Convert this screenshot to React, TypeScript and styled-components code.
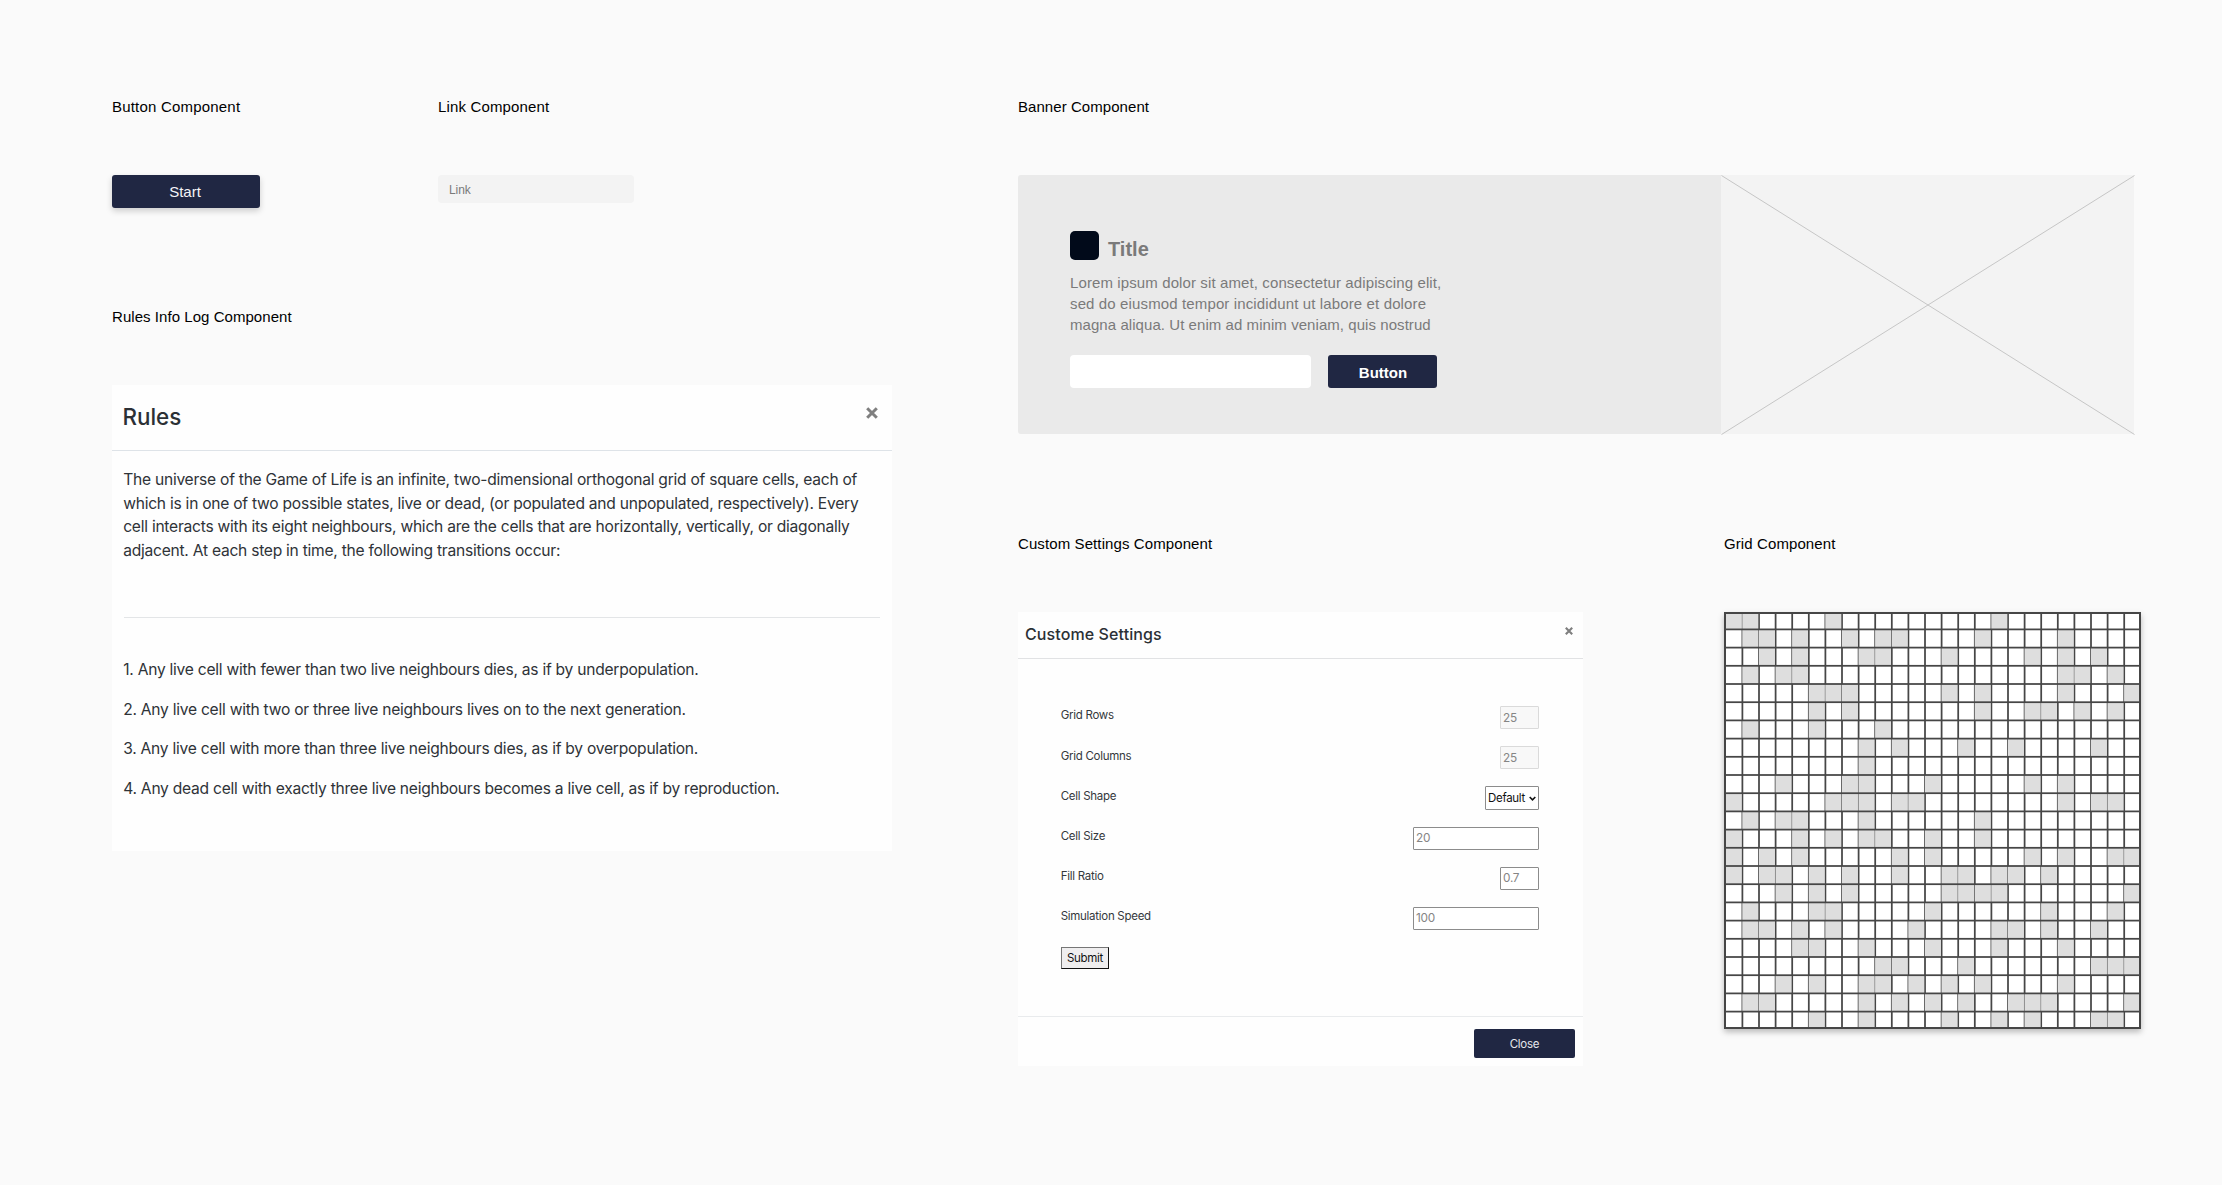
import React from 'react';
import styled, { createGlobalStyle } from 'styled-components';

const NAVY = '#202743';
const HELV = '"Liberation Sans", Arial, sans-serif';
const SYSTEM = 'Inter, "Liberation Sans", sans-serif';

const GlobalStyle = createGlobalStyle`
  *, *::before, *::after { box-sizing: border-box; }
  body { margin: 0; background: #fafafa; font-family: ${HELV}; }
  h1, h2, p, ol { margin: 0; padding: 0; font-weight: 400; }
  button, input { font-family: inherit; margin: 0; }
`;

const Page = styled.main`
  display: flex;
  align-items: flex-start;
  gap: 126px;
  width: 2222px;
  height: 1185px;
  padding: 98px 0 0 112px;
  background: #fafafa;
  overflow: hidden;
`;

const Column = styled.div<{ $gap: number }>`
  display: flex;
  flex-direction: column;
  gap: ${(p) => p.$gap}px;
`;

const Row = styled.div<{ $gap: number }>`
  display: flex;
  align-items: flex-start;
  gap: ${(p) => p.$gap}px;
`;

const Section = styled.section`
  display: flex;
  flex-direction: column;
  gap: 60px;
`;

const SectionLabel = styled.h2<{ $tracking: number }>`
  height: 17px;
  font-size: 15px;
  line-height: 17px;
  letter-spacing: ${(p) => p.$tracking}px;
  color: #000;
  white-space: nowrap;
`;

const StartButton = styled.button`
  width: 148px;
  height: 33px;
  padding: 0 2px 0 0;
  border: 0;
  border-radius: 3px;
  background: ${NAVY};
  box-shadow: 0 3px 6px rgba(0, 0, 0, 0.18);
  color: #f4f4f6;
  font-size: 15px;
  line-height: 33px;
`;

const LinkField = styled.div`
  width: 196px;
  height: 28px;
  padding-left: 11px;
  border-radius: 4px;
  background: #f3f3f3;
  color: #7a7a7a;
  font-size: 12px;
  line-height: 30px;
  letter-spacing: -0.1px;
`;

/* Rules dialog */

const RulesCard = styled.article`
  width: 780px;
  height: 466px;
  background: #fefefe;
  color: #2f3338;
  font-family: ${SYSTEM};
`;

const RulesHeader = styled.header`
  display: flex;
  justify-content: space-between;
  align-items: flex-start;
  height: 66px;
  padding: 19px 14px 0 10.5px;
  border-bottom: 1px solid #dee3e8;
`;

const RulesTitle = styled.h1`
  font-size: 22.4px;
  line-height: 26px;
  font-weight: 500;
  color: #2b3035;
`;

const CloseMark = styled.svg<{ $top: number }>`
  display: block;
  margin-top: ${(p) => p.$top}px;
  stroke: #7f7f7f;
  stroke-linecap: butt;
`;

const RulesBody = styled.div`
  padding: 17px 12px 0;
`;

const RulesText = styled.p`
  margin-left: -0.8px;
  font-size: 15.6px;
  line-height: 23.7px;
  letter-spacing: -0.252px;
  white-space: nowrap;
`;

const Divider = styled.hr`
  height: 1px;
  margin: 54px 0 40.5px;
  border: 0;
  background: #e3e5e7;
`;

const RulesList = styled.ol`
  display: flex;
  flex-direction: column;
  gap: 15.75px;
  list-style: none;
`;

/* Banner */

const BannerFrame = styled.div`
  display: flex;
  width: 1116px;
  height: 259px;
`;

const BannerContent = styled.div`
  width: 703px;
  padding: 56px 0 0 52px;
  border-radius: 3px 0 0 3px;
  background: #eaeaea;
`;

const BannerHeading = styled.div`
  display: flex;
  gap: 9px;
  height: 30px;
`;

const BannerMark = styled.span`
  width: 29px;
  height: 29px;
  border-radius: 5px;
  background: #010a1a;
`;

const BannerTitle = styled.h1`
  margin-top: 6px;
  font-size: 20px;
  line-height: 24px;
  font-weight: 700;
  color: #7a7a7a;
`;

const BannerText = styled.div`
  margin: 12px 0 19.6px;
`;

const BannerLine = styled.p<{ $tracking: number }>`
  font-size: 15px;
  line-height: 20.8px;
  letter-spacing: ${(p) => p.$tracking}px;
  color: #7a7a7a;
  white-space: nowrap;
`;

const BannerInput = styled.input`
  width: 241px;
  height: 33px;
  border: 0;
  border-radius: 4px;
  background: #fff;
`;

const BannerButton = styled.button`
  width: 109px;
  height: 33px;
  padding: 2px 0 0 1px;
  border: 0;
  border-radius: 3px;
  background: ${NAVY};
  color: #fff;
  font-size: 15px;
  font-weight: 700;
`;

const Placeholder = styled.svg`
  display: block;
  width: 413px;
  height: 259px;
  background: #f3f3f3;
  stroke: #c6c6c6;
  overflow: visible;
`;

/* Settings dialog */

const SettingsCard = styled.article`
  display: flex;
  flex-direction: column;
  width: 565px;
  height: 454px;
  background: #fefefe;
  color: #34383c;
  font-family: ${SYSTEM};
`;

const SettingsHeader = styled.header`
  display: flex;
  justify-content: space-between;
  align-items: flex-start;
  height: 47px;
  padding: 12px 10px 0 7px;
  border-bottom: 1px solid #e1e2e4;
`;

const SettingsTitle = styled.h1`
  font-size: 16px;
  line-height: 20px;
  font-weight: 500;
  letter-spacing: 0.1px;
  color: #2b3035;
`;

const SettingsBody = styled.form`
  flex: 1;
  padding: 47px 44px 0 42px;
`;

const Field = styled.label`
  display: flex;
  justify-content: space-between;
  align-items: flex-start;
  height: 40.2px;
`;

const FieldName = styled.span`
  margin: 1.4px 0 0 0.7px;
  font-size: 11.5px;
  line-height: 16px;
  letter-spacing: -0.28px;
`;

const FieldInput = styled.input<{ $wide?: boolean }>`
  width: ${(p) => (p.$wide ? 126 : 39)}px;
  height: 23px;
  padding: 0 2px;
  border: 1px solid #8c8c8c;
  border-radius: 1px;
  background: #fff;
  color: #858585;
  font-size: 11.8px;
  letter-spacing: -0.25px;

  &:disabled {
    border-color: #dadada;
    background: #f8f8f8;
  }
`;

const Select = styled.span`
  display: flex;
  align-items: center;
  justify-content: space-between;
  width: 54px;
  height: 24px;
  padding: 0 2px;
  border: 1px solid #8c8c8c;
  border-radius: 1px;
  background: #fff;
  color: #111;
  font-size: 11.5px;
  letter-spacing: -0.3px;
`;

const SubmitButton = styled.button`
  display: block;
  width: 48px;
  height: 22px;
  margin-left: 1px;
  padding: 0;
  border: 1px solid;
  border-color: #767676 #111 #111 #767676;
  outline: 0;
  background: #efeeef;
  color: #111;
  font-size: 11.5px;
  letter-spacing: -0.28px;
`;

const SettingsFooter = styled.footer`
  display: flex;
  justify-content: flex-end;
  height: 50px;
  padding: 12px 8px 0 0;
  border-top: 1px solid #e9ebed;
`;

const CloseButton = styled.button`
  width: 101px;
  height: 29px;
  padding: 0;
  border: 0;
  border-radius: 2px;
  background: ${NAVY};
  color: #e6e7ec;
  font-size: 11.5px;
  letter-spacing: -0.25px;
`;

/* Game board */

const Board = styled.svg`
  display: block;
  width: 417px;
  height: 417px;
  background: #fff;
  box-shadow: 0 3px 6px rgba(0, 0, 0, 0.26);
`;

const COLS = 25;
const ROWS = 23;
const LINE = 1.75;
const colLine = (k: number) => (k === 0 ? 1.2 : k === COLS ? 416 : 18.4 + 16.6 * (k - 1));
const rowLine = (k: number) => (k === 0 ? 1.2 : k === ROWS ? 416 : 17.4 + 18.2 * (k - 1));

const LIVE: number[][] = [
  [0, 1, 6, 16],
  [1, 2, 4, 7, 9, 10, 15, 20],
  [2, 4, 8, 9, 13, 18, 20, 22],
  [1, 3, 4, 20, 21, 23],
  [5, 6, 7, 13, 15, 20, 24],
  [5, 7, 15, 18, 19, 21, 23],
  [1, 5, 9],
  [8, 10, 14, 17, 22],
  [8],
  [3, 7, 8, 12, 18, 20],
  [0, 6, 7, 8, 10, 11, 20, 22, 23],
  [1, 3, 4, 8, 15],
  [0, 4, 6, 8, 9, 12, 15],
  [0, 2, 4, 10, 12, 18, 20, 23, 24],
  [0, 2, 3, 5, 7, 10, 13, 14, 16, 17, 19],
  [3, 5, 7, 13, 14, 15, 16, 24],
  [1, 5, 6, 12, 19, 23],
  [1, 2, 4, 6, 11, 16, 17, 19, 22],
  [4, 5, 8, 12, 16, 20],
  [9, 10, 14, 22, 23, 24],
  [3, 5, 8, 9, 11, 13, 15, 20],
  [1, 2, 8, 10, 12, 14, 17, 18, 19, 24],
  [5, 8, 13, 16, 18, 22, 23],
];

const range = (n: number) => Array.from({ length: n }, (_, i) => i);

function GameBoard() {
  return (
    <Board viewBox="0 0 417 417">
      {range(COLS - 1).map((k) => (
        <rect key={k} x={colLine(k + 1) - LINE / 2} y={0} width={LINE} height={417} fill="#464646" />
      ))}
      {LIVE.map((cols, r) =>
        cols.map((c) => (
          <rect
            key={`${r}-${c}`}
            x={colLine(c) - 0.1}
            y={rowLine(r)}
            width={colLine(c + 1) - LINE / 2 - colLine(c) + 0.2}
            height={rowLine(r + 1) - rowLine(r)}
            fill="#dedede"
          />
        )),
      )}
      {range(ROWS - 1).map((k) => (
        <rect key={k} x={0} y={rowLine(k + 1) - LINE / 2} width={417} height={LINE} fill="#464646" />
      ))}
      <rect x={1} y={1} width={415} height={415} fill="none" stroke="#464646" strokeWidth={2} />
    </Board>
  );
}

function CloseIcon({ size, top, weight }: { size: number; top: number; weight: number }) {
  return (
    <CloseMark width={size} height={size} viewBox="0 0 12 12" $top={top} strokeWidth={weight}>
      <path d="M1.2 1.2 10.8 10.8M10.8 1.2 1.2 10.8" />
    </CloseMark>
  );
}

const INTRO = [
  'The universe of the Game of Life is an infinite, two-dimensional orthogonal grid of square cells, each of',
  'which is in one of two possible states, live or dead, (or populated and unpopulated, respectively). Every',
  'cell interacts with its eight neighbours, which are the cells that are horizontally, vertically, or diagonally',
  'adjacent. At each step in time, the following transitions occur:',
];

const RULES = [
  '1. Any live cell with fewer than two live neighbours dies, as if by underpopulation.',
  '2. Any live cell with two or three live neighbours lives on to the next generation.',
  '3. Any live cell with more than three live neighbours dies, as if by overpopulation.',
  '4. Any dead cell with exactly three live neighbours becomes a live cell, as if by reproduction.',
];

function RulesDialog() {
  return (
    <RulesCard>
      <RulesHeader>
        <RulesTitle>Rules</RulesTitle>
        <CloseIcon size={12} top={3} weight={3} />
      </RulesHeader>
      <RulesBody>
        {INTRO.map((line) => (
          <RulesText key={line}>{line}</RulesText>
        ))}
        <Divider />
        <RulesList>
          {RULES.map((rule) => (
            <RulesText as="li" key={rule}>{rule}</RulesText>
          ))}
        </RulesList>
      </RulesBody>
    </RulesCard>
  );
}

function Banner() {
  return (
    <BannerFrame>
      <BannerContent>
        <BannerHeading>
          <BannerMark />
          <BannerTitle>Title</BannerTitle>
        </BannerHeading>
        <BannerText>
          <BannerLine $tracking={0.11}>Lorem ipsum dolor sit amet, consectetur adipiscing elit,</BannerLine>
          <BannerLine $tracking={0.13}>sed do eiusmod tempor incididunt ut labore et dolore</BannerLine>
          <BannerLine $tracking={0.06}>magna aliqua. Ut enim ad minim veniam, quis nostrud</BannerLine>
        </BannerText>
        <Row $gap={17}>
          <BannerInput />
          <BannerButton>Button</BannerButton>
        </Row>
      </BannerContent>
      <Placeholder viewBox="0 0 413 259">
        <path d="M0.5 0.5 413.5 259.5M413.5 0.5 0.5 259.5" />
      </Placeholder>
    </BannerFrame>
  );
}

function SettingsDialog() {
  return (
    <SettingsCard>
      <SettingsHeader>
        <SettingsTitle>Custome Settings</SettingsTitle>
        <CloseIcon size={8} top={3} weight={3.2} />
      </SettingsHeader>
      <SettingsBody>
        <Field>
          <FieldName>Grid Rows</FieldName>
          <FieldInput defaultValue="25" disabled />
        </Field>
        <Field>
          <FieldName>Grid Columns</FieldName>
          <FieldInput defaultValue="25" disabled />
        </Field>
        <Field>
          <FieldName>Cell Shape</FieldName>
          <Select>
            Default
            <svg width="7" height="5" viewBox="0 0 7 5" fill="none" stroke="#111" strokeWidth="1.6">
              <path d="M.7 1 3.5 3.8 6.3 1" />
            </svg>
          </Select>
        </Field>
        <Field>
          <FieldName>Cell Size</FieldName>
          <FieldInput defaultValue="20" $wide />
        </Field>
        <Field>
          <FieldName>Fill Ratio</FieldName>
          <FieldInput defaultValue="0.7" />
        </Field>
        <Field>
          <FieldName>Simulation Speed</FieldName>
          <FieldInput defaultValue="100" $wide />
        </Field>
        <SubmitButton type="button">Submit</SubmitButton>
      </SettingsBody>
      <SettingsFooter>
        <CloseButton>Close</CloseButton>
      </SettingsFooter>
    </SettingsCard>
  );
}

export default function App() {
  return (
    <>
      <GlobalStyle />
      <Page>
        <Column $gap={100}>
          <Row $gap={178}>
            <Section>
              <SectionLabel $tracking={0.2}>Button Component</SectionLabel>
              <StartButton>Start</StartButton>
            </Section>
            <Section>
              <SectionLabel $tracking={0.15}>Link Component</SectionLabel>
              <LinkField>Link</LinkField>
            </Section>
          </Row>
          <Section>
            <SectionLabel $tracking={0.05}>Rules Info Log Component</SectionLabel>
            <RulesDialog />
          </Section>
        </Column>
        <Column $gap={101}>
          <Section>
            <SectionLabel $tracking={0.06}>Banner Component</SectionLabel>
            <Banner />
          </Section>
          <Row $gap={141}>
            <Section>
              <SectionLabel $tracking={0.1}>Custom Settings Component</SectionLabel>
              <SettingsDialog />
            </Section>
            <Section>
              <SectionLabel $tracking={0.1}>Grid Component</SectionLabel>
              <GameBoard />
            </Section>
          </Row>
        </Column>
      </Page>
    </>
  );
}
